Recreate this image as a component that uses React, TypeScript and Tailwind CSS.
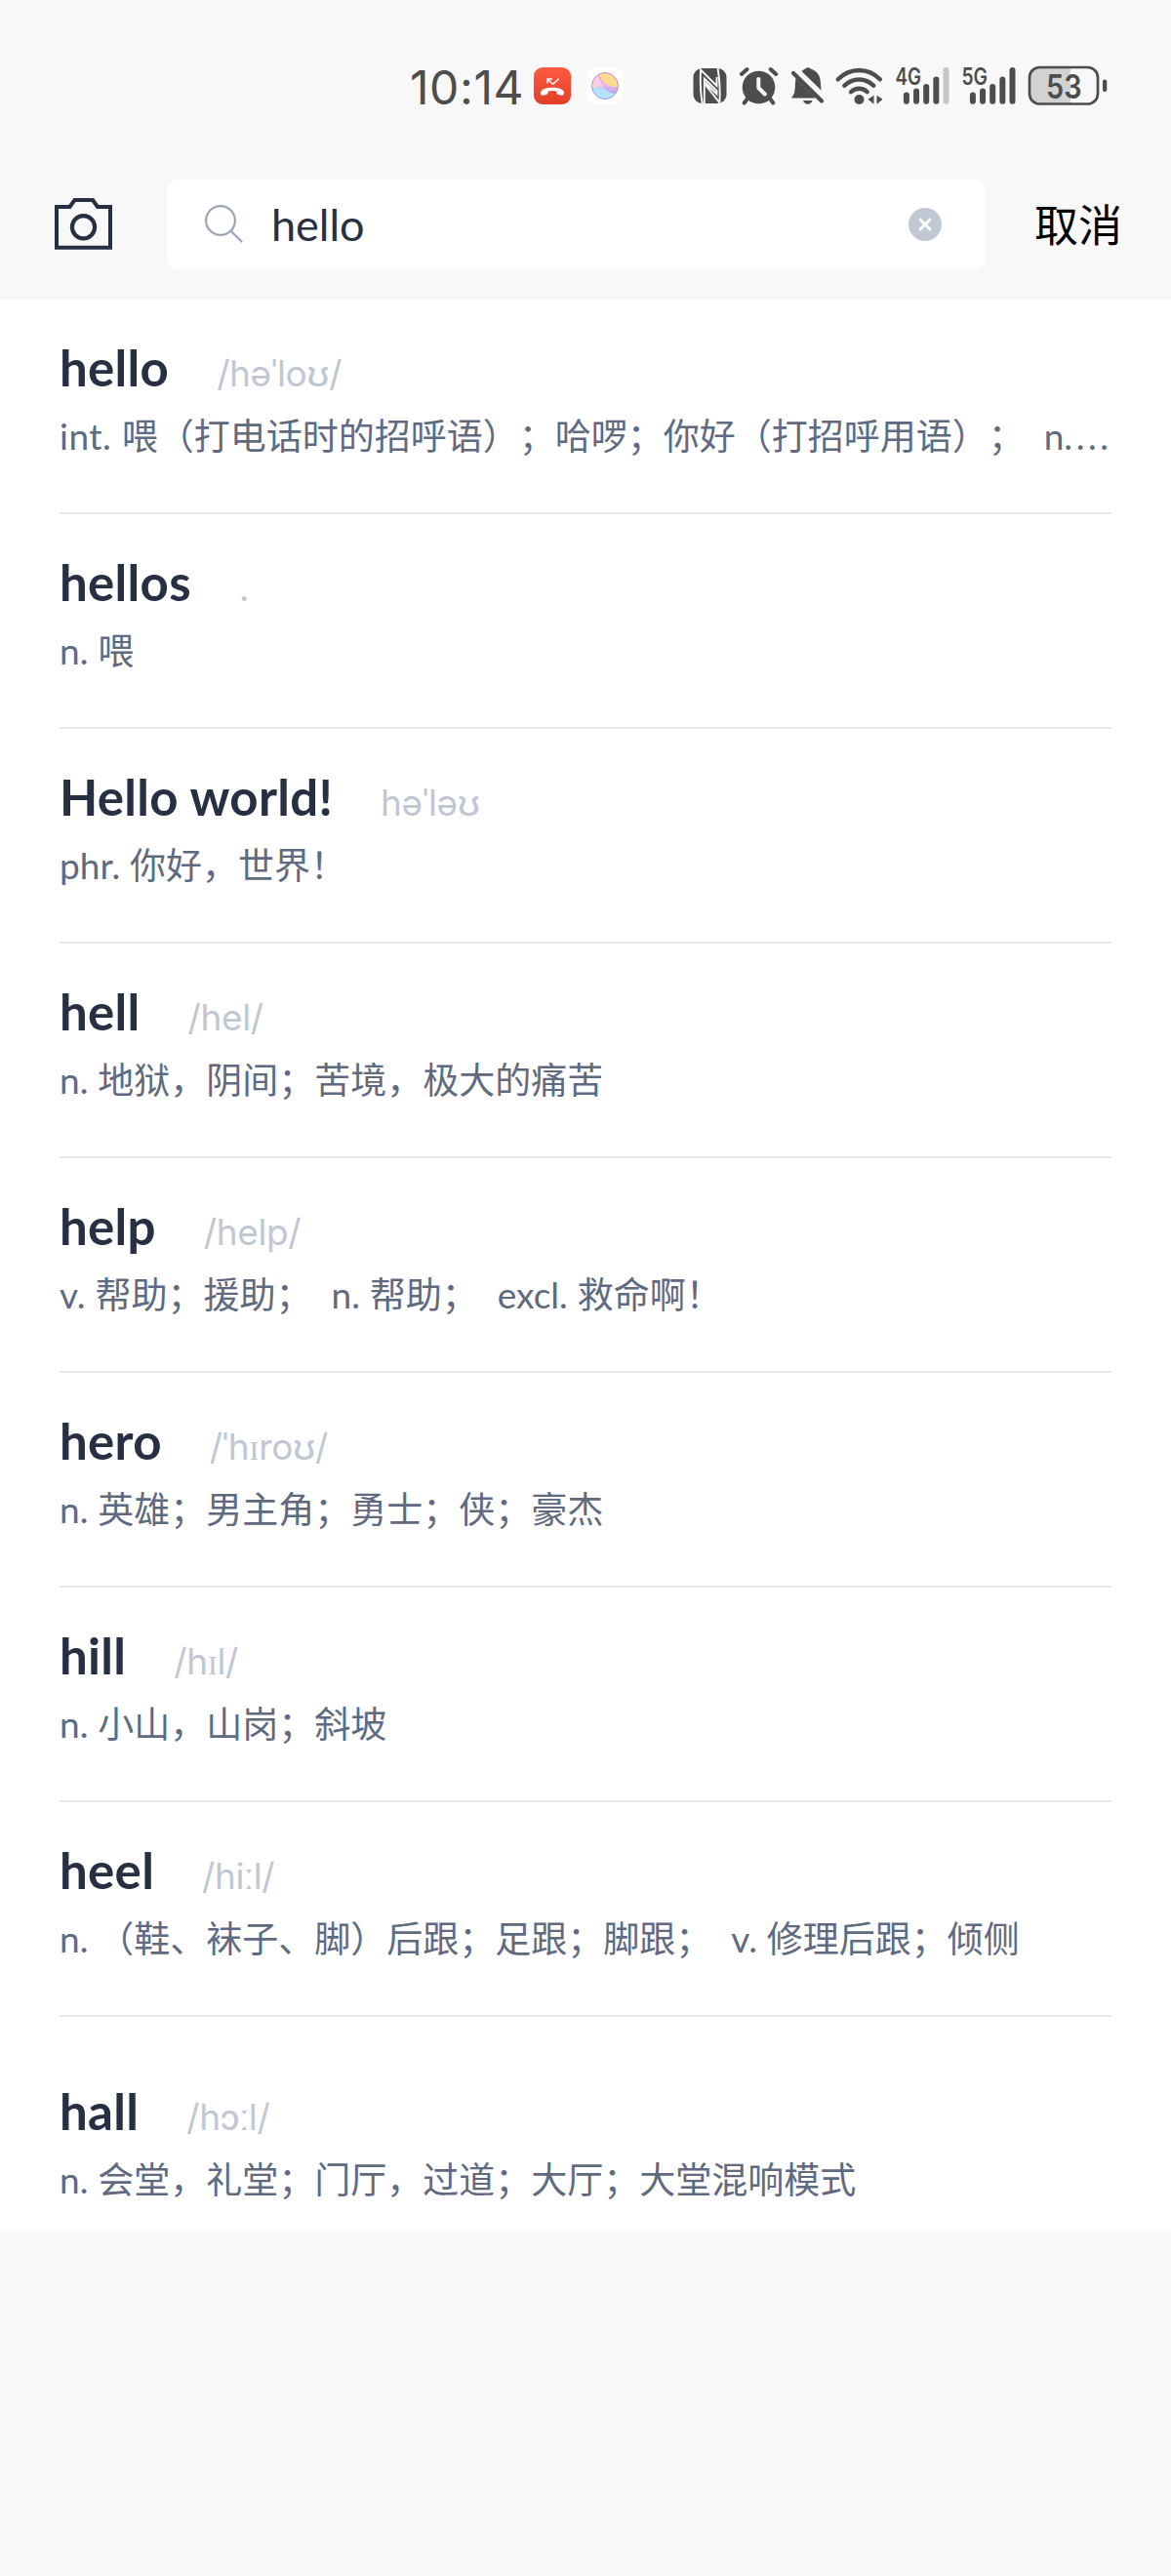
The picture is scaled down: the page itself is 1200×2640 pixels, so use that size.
import type { ReactNode } from 'react'

type Entry = { word: string; phonetic: string; meaning: ReactNode; last?: boolean }

const entries: Entry[] = [
  {
    word: 'hello',
    phonetic: '/həˈloʊ/',
    meaning: (
      <>
        <span className="tracking-[0.5px]">int. </span>喂（打电话时的招呼语）；哈啰；你好（打招呼用语）；{'  '}n<span className="tracking-[3.6px]">....</span>
      </>
    ),
  },
  { word: 'hellos', phonetic: '.', meaning: 'n. 喂' },
  { word: 'Hello world!', phonetic: 'həˈləʊ', meaning: 'phr. 你好，世界！' },
  { word: 'hell', phonetic: '/hel/', meaning: 'n. 地狱，阴间；苦境，极大的痛苦' },
  { word: 'help', phonetic: '/help/', meaning: 'v. 帮助；援助；  n. 帮助；  excl. 救命啊！' },
  { word: 'hero', phonetic: '/ˈhɪroʊ/', meaning: 'n. 英雄；男主角；勇士；侠；豪杰' },
  { word: 'hill', phonetic: '/hɪl/', meaning: 'n. 小山，山岗；斜坡' },
  { word: 'heel', phonetic: '/hiːl/', meaning: 'n. （鞋、袜子、脚）后跟；足跟；脚跟；  v. 修理后跟；倾侧' },
  { word: 'hall', phonetic: '/hɔːl/', meaning: 'n. 会堂，礼堂；门厅，过道；大厅；大堂混响模式', last: true },
]

const INK = '#4d4d4d'

/* A slice of the status bar; every slice shares the bar's coordinate space. */
function Slice({ from, to, children }: { from: number; to: number; children?: ReactNode }) {
  return (
    <svg className="block h-14 shrink-0" width={to - from} height={56} viewBox={`${from} 60 ${to - from} 56`}>
      {children}
    </svg>
  )
}

function Signal({ x, label, dimLast }: { x: number; label: string; dimLast?: boolean }) {
  const tops = [97.5, 93.5, 89, 81.5, 72]
  return (
    <>
      <text x={x} y="87" fontSize="24" fontWeight="600" fill={INK} textLength="26.5" lengthAdjust="spacingAndGlyphs" fontFamily="Inter, sans-serif">
        {label}
      </text>
      {tops.map((t, i) => (
        <path key={t} d={`M${x + 11.4 + i * 10.15} ${t}V103.8`} stroke={dimLast && i === 4 ? '#c6c6c6' : INK} strokeWidth="6" strokeLinecap="round" />
      ))}
    </>
  )
}

function StatusBar() {
  return (
    <div className="flex h-[184px] items-start pt-[60px] pl-[420px]">
      <div className="h-14 w-[121px] shrink-0 font-['Inter'] text-[48px] leading-[60px] tracking-[0.6px] text-[#4d4d4d]">10:14</div>
      <Slice from={541} to={593}>
        <defs>
          <linearGradient id="call" x1="0" y1="0" x2="0" y2="1">
            <stop offset="0" stopColor="#ff5b42" />
            <stop offset="1" stopColor="#e23f28" />
          </linearGradient>
        </defs>
        <rect x="547" y="69" width="38" height="38" rx="9" fill="url(#call)" />
        <path d="M554 95c0-7 24.200-7 24 0 0 3-1 3.400-6 2-1.800-.6-1.600-2-1.700-3.400-2.600-.9-6-.9-8.600 0-.1 1.400.1 2.800-1.700 3.400-5 1.400-6 1-6-2z" fill="#fff" />
        <path d="M561 85.500V81h5M561.500 81.500l5 4.800 6.200-5.600" fill="none" stroke="#fff" strokeWidth="1.400" />
      </Slice>
      <Slice from={593} to={705}>
        <defs>
          <linearGradient id="orb" x1="0" y1="0" x2="0" y2="1">
            <stop offset="0" stopColor="#f3a6cf" />
            <stop offset="0.5" stopColor="#e9b3ee" />
            <stop offset="1" stopColor="#8f9cf0" />
          </linearGradient>
          <clipPath id="orbClip">
            <circle cx="620" cy="88" r="13.500" />
          </clipPath>
        </defs>
        <rect x="601" y="69" width="38" height="38" rx="9" fill="#fff" />
        <circle cx="620" cy="88" r="13.500" fill="url(#orb)" />
        <g clipPath="url(#orbClip)">
          <path d="M613 72c2 10 8 18 21 17V72z" fill="#fbdc8c" />
          <path d="M605 92c6-5 14-2 17 1 4 3 8 4 12 2l-6 9h-16z" fill="#b4e2fb" />
          <path d="M606 84l7-8c1 6 3 10 6 13-5-1-10 0-13 3z" fill="#fbd0e2" />
        </g>
        <circle cx="620" cy="88" r="13.500" fill="none" stroke="#a98fe0" strokeWidth="0.900" />
      </Slice>
      <Slice from={705} to={751}>
        <rect x="710.500" y="70" width="34" height="36" rx="9" fill={INK} />
        <path d="M720 107C717.500 95 717.500 82 718 71.500L734.500 88V79M721.800 107V80.500L734.500 93V96.500L722.500 84.500M723 87L737.500 105.500C738 95 737.500 82 735.500 69.500" fill="none" stroke="#f8f8f8" strokeWidth="1.900" />
      </Slice>
      <Slice from={751} to={804}>
        <circle cx="777.500" cy="89.500" r="16.800" fill={INK} />
        <path d="M760 76l5.500-5M789.700 71l5.500 5M766 101l-3.300 4.500M789 101l3.300 4.500" stroke={INK} strokeWidth="4" strokeLinecap="round" />
        <path d="M777.300 81v9l6.500 6.500" fill="none" stroke="#f8f8f8" strokeWidth="4" strokeLinecap="round" strokeLinejoin="round" />
      </Slice>
      <Slice from={804} to={850}>
        <path d="M815.500 80L836 100.500H811l3-5c1-5 .7-10 1.500-15.500z" fill={INK} />
        <path d="M821.500 73c1.500-1 2.500-2 3.800-2.500 1.500-1.800 3.900-1.800 5.400 0 7 2.500 9.500 7 10 12.500l.8 9.500z" fill={INK} />
        <path d="M823 103h9.500c-1.500 5-8 5-9.500 0z" fill={INK} />
        <path d="M813 75l29 28.500" stroke={INK} strokeWidth="4.200" strokeLinecap="round" />
      </Slice>
      <Slice from={850} to={911}>
        <g fill="none" stroke={INK} strokeWidth="4.400" strokeLinecap="round">
          <path d="M858.800 81.300c12-12.500 31-12.500 43 0" />
          <path d="M865.300 87.800c8.500-8.500 21.500-8.500 30 0" />
          <path d="M872 94.200c4.700-4.600 12-4.600 16.700 0" />
        </g>
        <circle cx="880.500" cy="102" r="5" fill={INK} />
        <path d="M889.500 101.800l6-4v9zM898.500 97.800v9l6-5z" fill={INK} />
      </Slice>
      <Slice from={911} to={979}>
        <Signal x={917.5} label="4G" dimLast />
      </Slice>
      <Slice from={979} to={1047}>
        <Signal x={985.5} label="5G" />
      </Slice>
      <Slice from={1047} to={1145}>
        <path d="M1097 69h-31a11 11 0 0 0-11 11v16a11 11 0 0 0 11 11h31z" fill="#d2d2d2" />
        <rect x="1055" y="69" width="70" height="37.500" rx="10.500" fill="none" stroke={INK} strokeWidth="2.700" />
        <rect x="1130" y="81.500" width="4.300" height="12.500" rx="2" fill={INK} />
        <text x="1072" y="101" fontSize="33.500" fontWeight="600" fill={INK} textLength="36.500" lengthAdjust="spacingAndGlyphs" fontFamily="Inter, sans-serif">
          53
        </text>
      </Slice>
    </div>
  )
}

function SearchRow() {
  return (
    <div className="flex h-[123px] items-start pl-[50px]">
      <svg className="block shrink-0" width="71" height="92" viewBox="50 184 71 92" fill="none" stroke="#272f42">
        <path d="M58 212h13.500l5-7h18.500l5 7H113v41.700H58z" strokeWidth="4" />
        <circle cx="85.500" cy="232.700" r="11.600" strokeWidth="4.200" />
      </svg>
      <div className="ml-[50px] flex h-[92px] w-[839px] shrink-0 items-center rounded-xl bg-white pr-[43px] pl-[36px]">
        <svg className="block shrink-0" width="44" height="44" viewBox="207 208 44 44" fill="none" stroke="#9ba4b6" strokeWidth="2.200">
          <circle cx="226" cy="226" r="14.900" />
          <path d="M236.500 236.500l11 11" strokeLinecap="round" />
        </svg>
        <span className="ml-[27px] flex-1 font-['Lato'] text-[45px] leading-[60px] text-[#272f42]">hello</span>
        <svg className="block shrink-0" width="38" height="38" viewBox="-19 -19 38 38">
          <circle r="17" fill="#c0c8d4" />
          <path d="M-5-5L5 5M5-5L-5 5" stroke="#fff" strokeWidth="3" strokeLinecap="round" />
        </svg>
      </div>
      <span className="ml-[50px] shrink-0 font-['Noto_Sans_CJK_SC'] text-[45px] leading-[90px] text-black">取消</span>
    </div>
  )
}

function Row({ word, phonetic, meaning, last }: Entry) {
  return (
    <li className={last ? 'h-[220px] pt-[57px]' : 'h-[220px] border-b-2 border-[#e6e8ec] pt-[30px]'}>
      <div className="flex h-[80px] items-baseline leading-[80px]">
        <span className="font-['Lato'] text-[51px] font-bold tracking-[0.3px] text-[#272f42]">{word}</span>
        <span className="ml-[49px] font-['Inter'] text-[37px] tracking-[-0.4px] text-[#c0c7d3]">{phonetic}</span>
      </div>
      <div className="h-[60px] whitespace-pre font-['Lato','Noto_Sans_CJK_SC',sans-serif] text-[37px] leading-[60px] text-[#5f6a80] [text-spacing-trim:space-all] [word-spacing:0.5px]">
        {meaning}
      </div>
    </li>
  )
}

export default function App() {
  return (
    <div className="h-[2640px] w-[1200px] overflow-hidden bg-[#f8f8f8]">
      <StatusBar />
      <SearchRow />
      <ul className="h-[1980px] bg-white px-[61px]">
        {entries.map((e) => (
          <Row key={e.word} {...e} />
        ))}
      </ul>
    </div>
  )
}
